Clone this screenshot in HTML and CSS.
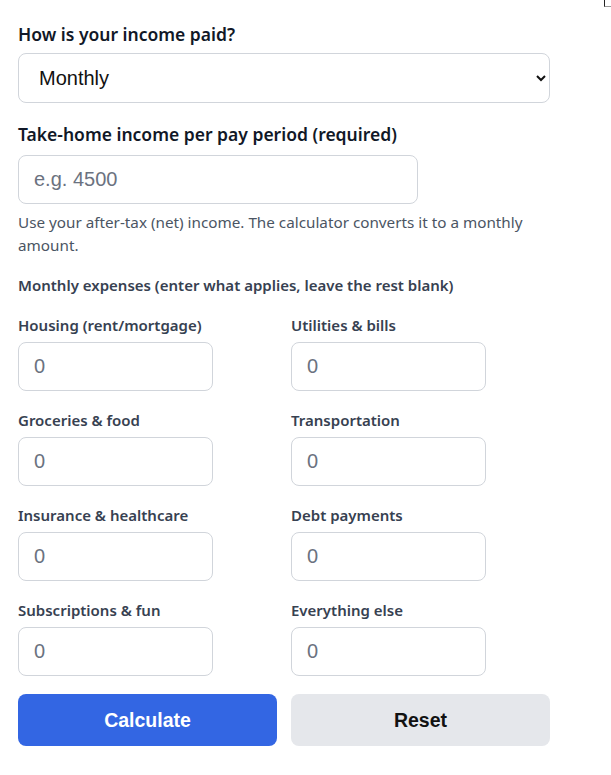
FILE: index.html
```html
<!DOCTYPE html>
<html lang="en">
<head>
    <meta charset="UTF-8">
    <meta name="viewport" content="width=device-width, initial-scale=1.0">
    <title>Budget Calculator</title>
    <link rel="stylesheet" href="styles.css">
</head>
<body>

    <span class="corner-mark"></span>

    <form class="calc" onsubmit="return false;">

        <!-- Pay frequency -->
        <label class="field-title" for="frequency">How is your income paid?</label>
        <select id="frequency" class="select-box">
            <option>Weekly</option>
            <option>Every two weeks</option>
            <option>Twice a month</option>
            <option selected>Monthly</option>
            <option>Yearly</option>
        </select>

        <!-- Income -->
        <label class="field-title income-title" for="income">Take-home income per pay period (required)</label>
        <input id="income" class="text-box income-box" type="text" placeholder="e.g. 4500">
        <p class="hint">Use your after-tax (net) income. The calculator converts it to a monthly amount.</p>

        <!-- Expenses -->
        <p class="section-title">Monthly expenses (enter what applies, leave the rest blank)</p>

        <div class="expense-grid">
            <div class="expense">
                <label for="housing">Housing (rent/mortgage)</label>
                <input id="housing" class="text-box" type="text" placeholder="0">
            </div>
            <div class="expense">
                <label for="utilities">Utilities &amp; bills</label>
                <input id="utilities" class="text-box" type="text" placeholder="0">
            </div>
            <div class="expense">
                <label for="groceries">Groceries &amp; food</label>
                <input id="groceries" class="text-box" type="text" placeholder="0">
            </div>
            <div class="expense">
                <label for="transport">Transportation</label>
                <input id="transport" class="text-box" type="text" placeholder="0">
            </div>
            <div class="expense">
                <label for="insurance">Insurance &amp; healthcare</label>
                <input id="insurance" class="text-box" type="text" placeholder="0">
            </div>
            <div class="expense">
                <label for="debt">Debt payments</label>
                <input id="debt" class="text-box" type="text" placeholder="0">
            </div>
            <div class="expense">
                <label for="fun">Subscriptions &amp; fun</label>
                <input id="fun" class="text-box" type="text" placeholder="0">
            </div>
            <div class="expense">
                <label for="other">Everything else</label>
                <input id="other" class="text-box" type="text" placeholder="0">
            </div>
        </div>

        <div class="actions">
            <button type="submit" class="calc-btn">Calculate</button>
            <button type="reset" class="reset-btn">Reset</button>
        </div>
    </form>

</body>
</html>
```

FILE: styles.css
```css
* {
    margin: 0;
    padding: 0;
    box-sizing: border-box;
}

body {
    font-family: "Noto Sans", "Open Sans", sans-serif;
    background-color: #fff;
    color: #1f2937;
    padding: 23px 18px 0 18px;
}

.corner-mark {
    position: absolute;
    top: 0;
    left: 604px;
    width: 8px;
    height: 7px;
    border-left: 1px solid #222;
    border-bottom: 1px solid #999;
}

.calc {
    width: 532px;
}

.field-title {
    display: block;
    font-size: 17.5px;
    font-weight: 600;
    line-height: 22px;
    color: #111827;
    margin-bottom: 8px;
}

.income-title {
    margin-top: 20px;
    margin-bottom: 10px;
}

.select-box {
    display: block;
    width: 532px;
    height: 50px;
    padding: 0 16px;
    font-family: "Liberation Sans", Arial, sans-serif;
    font-size: 20px;
    color: #111;
    background-color: #fff;
    border: 1px solid #d1d5db;
    border-radius: 8px;
}

.text-box {
    display: block;
    width: 195px;
    height: 49px;
    padding: 0 15px;
    font-family: "Liberation Sans", Arial, sans-serif;
    font-size: 20px;
    color: #111;
    background-color: #fff;
    border: 1px solid #d1d5db;
    border-radius: 8px;
    outline: none;
}

.text-box::placeholder {
    color: #6b7280;
}

.income-box {
    width: 400px;
}

.hint {
    margin-top: 7px;
    font-size: 15.25px;
    line-height: 23px;
    color: #4b5563;
}

.section-title {
    margin-top: 18px;
    font-size: 15px;
    font-weight: 600;
    line-height: 20px;
    color: #374151;
}

.expense-grid {
    display: grid;
    grid-template-columns: 1fr 1fr;
    column-gap: 14px;
    row-gap: 19px;
    margin-top: 20px;
}

.expense label {
    display: block;
    font-size: 15px;
    font-weight: 600;
    line-height: 20px;
    color: #374151;
    margin-bottom: 7px;
}

.actions {
    display: grid;
    grid-template-columns: 1fr 1fr;
    gap: 14px;
    margin-top: 18px;
}

.calc-btn,
.reset-btn {
    height: 52px;
    font-family: "Liberation Sans", Arial, sans-serif;
    font-size: 19.5px;
    font-weight: bold;
    border: none;
    border-radius: 8px;
    cursor: pointer;
}

.calc-btn {
    background-color: #3366e3;
    color: #fff;
}

.reset-btn {
    background-color: #e5e7eb;
    color: #111;
}
```
